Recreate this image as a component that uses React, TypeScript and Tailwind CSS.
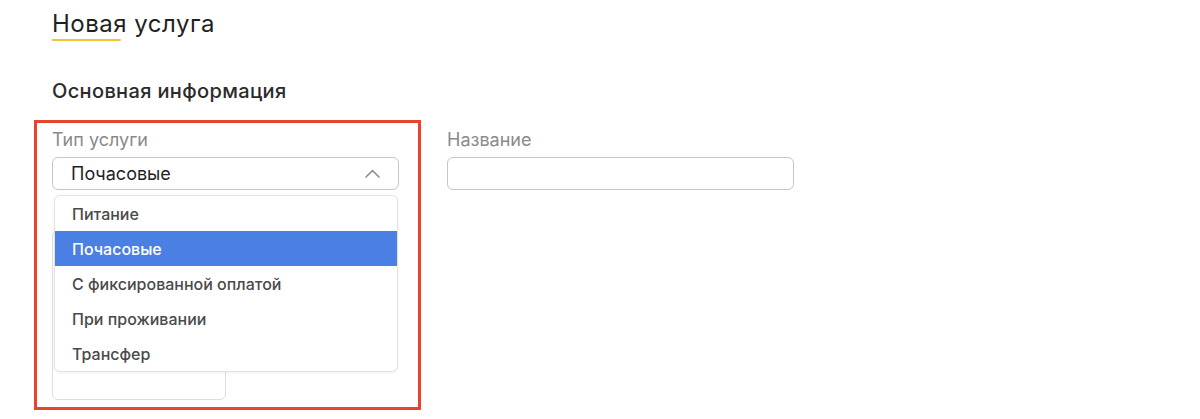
const serviceTypes = [
  "Питание",
  "Почасовые",
  "С фиксированной оплатой",
  "При проживании",
  "Трансфер",
]

function ChevronUpIcon() {
  return (
    <svg width="15" height="9" viewBox="0 0 15 9" fill="none" className="text-[#8c8c8c]">
      <path d="M1 8L7.5 1.5L14 8" stroke="currentColor" strokeWidth="1.6" strokeLinecap="round" strokeLinejoin="round" />
    </svg>
  )
}

function ServiceTypeSelect({ value }: { value: string }) {
  return (
    <div className="relative w-[347px]">
      <button
        type="button"
        className="flex h-[33px] w-full items-center justify-between rounded-[6px] border border-[#c6c6c6] bg-white pr-[18px] pl-[18px] text-[18px] text-[#1f1f1f]"
      >
        <span>{value}</span>
        <ChevronUpIcon />
      </button>

      {/* open list */}
      <div className="absolute top-[calc(100%+5px)] right-[1px] left-[2px] z-10 overflow-hidden rounded-[6px] border border-[#e3e3e3] bg-white shadow-[0_1px_3px_rgba(0,0,0,0.06)]">
        {serviceTypes.map((option) => {
          const isSelected = option === value
          return (
            <div
              key={option}
              className={
                isSelected
                  ? "flex h-[35px] items-center bg-[#4a7fe3] pl-[17px] text-[16px] font-medium text-white"
                  : "flex h-[35px] items-center pl-[17px] text-[16px] font-medium text-[#4a4a4a]"
              }
            >
              {option}
            </div>
          )
        })}
      </div>
    </div>
  )
}

export default function App() {
  return (
    <div className="min-h-[419px] bg-white pt-[9px] pl-[34px] font-['Inter',sans-serif] text-[#1f1f1f]">
      <div className="pl-[18px]">
        <h1 className="text-[24px] leading-[30px] font-normal tracking-[0.5px]">Новая услуга</h1>
        <div className="h-[2px] w-[69px] rounded-full bg-[#f4c134]" />
        <h2 className="mt-[38px] text-[20px] leading-[24px] font-medium tracking-[0.35px] text-[#2b2b2b]">
          Основная информация
        </h2>
      </div>

      <div className="mt-[17px] flex items-start gap-[26px]">
        <section className="h-[290px] w-[387px] border-[3px] border-[#e8432d] pt-[5px] pl-[15px]">
          <div className="text-[18px] leading-[24px] text-[#8a8a8a]">Тип услуги</div>
          <div className="mt-[5px]">
            <ServiceTypeSelect value="Почасовые" />
          </div>
          <div className="mt-[40px] h-[170px] w-[174px] rounded-[6px] border border-[#dedede]" />
        </section>

        <div className="pt-[8px]">
          <div className="text-[18px] leading-[24px] text-[#8a8a8a]">Название</div>
          <input
            type="text"
            className="mt-[5px] block h-[33px] w-[347px] rounded-[6px] border border-[#c6c6c6] bg-white outline-none"
          />
        </div>
      </div>
    </div>
  )
}
